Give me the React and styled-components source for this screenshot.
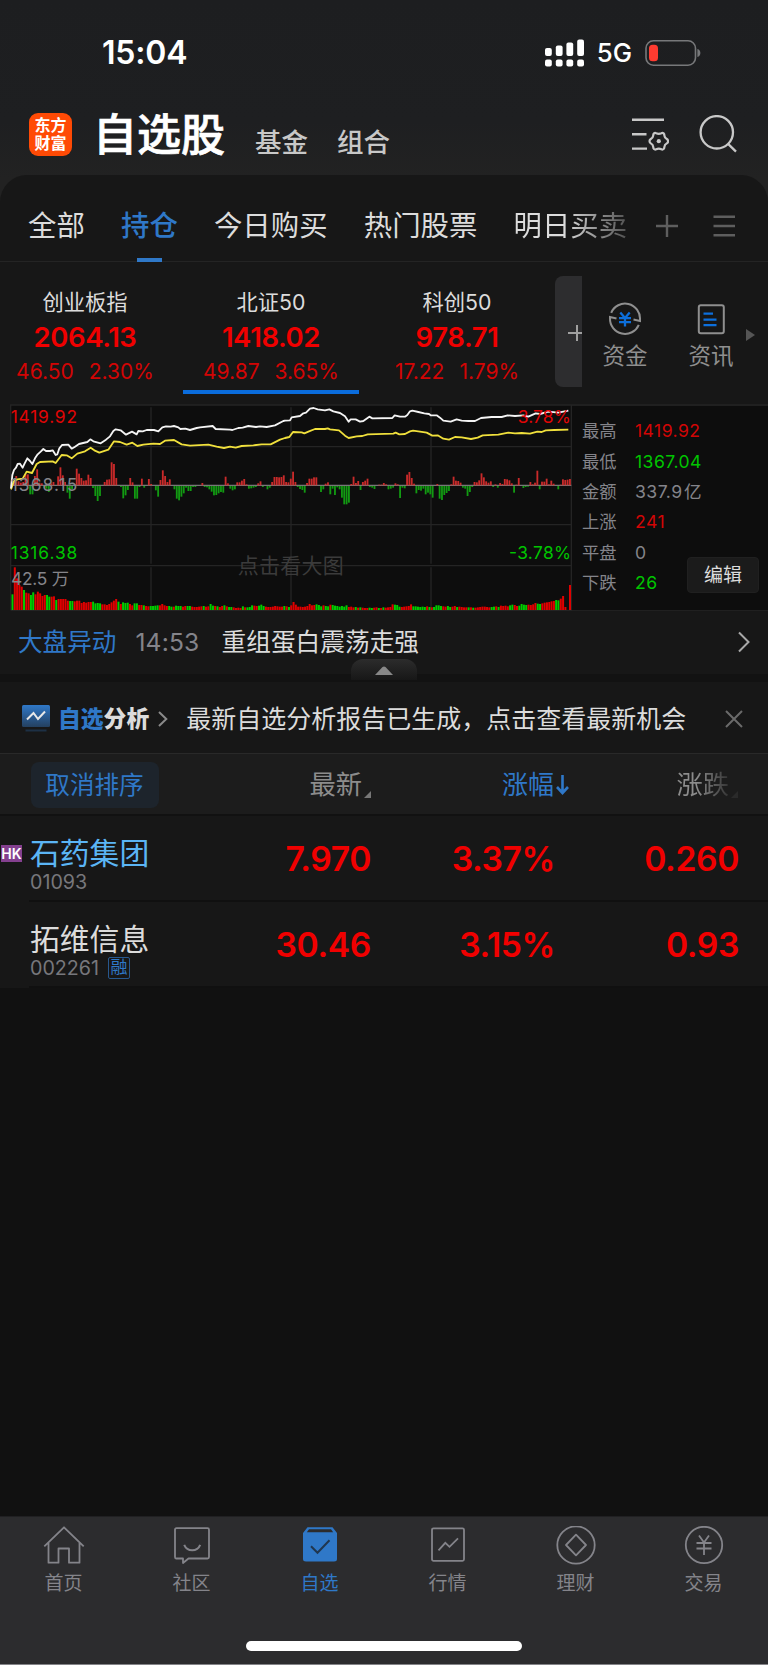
import React from "react";
import styled, { createGlobalStyle } from "styled-components";

const C = {
  blue: "#2f78c8",
  red: "#f00000",
  darkRed: "#d20505",
  green: "#00c400",
  gray: "#84848a",
  text: "#dcdcdc",
  panel: "#171717",
  line: "#242424",
};

const Global = createGlobalStyle`
  * { box-sizing: border-box; }
  body { margin: 0; background: #111; }
  svg { display: block; flex: none; }
`;

const Screen = styled.div`
  width: 768px;
  height: 1665px;
  display: flex;
  flex-direction: column;
  overflow: hidden;
  background: #111;
  color: ${C.text};
  font-family: Inter, "Noto Sans CJK SC", sans-serif;
  white-space: nowrap;
`;

const Text = styled.span`
  flex: none;
  font-size: ${(p) => p.$size}px;
  line-height: ${(p) => p.$lh || p.$size}px;
  font-weight: ${(p) => p.$weight || 400};
  letter-spacing: ${(p) => p.$ls || 0}px;
  color: ${(p) => p.$color || C.text};
  margin-left: ${(p) => p.$ml || 0}px;
`;

/* header */
const Header = styled.header`
  flex: none;
  height: 202px;
  margin-bottom: -27px;
  background: linear-gradient(#1d1e20, #1e1f21 60%, #222 88%);
`;
const StatusBar = styled.div`
  height: 105px;
  display: flex;
  align-items: center;
  justify-content: space-between;
  padding: 0 67px 0 102px;
`;
const StatusRight = styled.div`
  display: flex;
  align-items: center;
  gap: 13px;
`;
const TitleRow = styled.div`
  height: 58px;
  display: flex;
  align-items: center;
  padding: 0 31px 0 29px;
`;
const Logo = styled.div`
  width: 43px;
  height: 43px;
  border-radius: 9px;
  background: #ff4a05;
  display: grid;
  align-content: center;
  justify-content: center;
  font-size: 16px;
  line-height: 18px;
  font-weight: 700;
  color: #fff;
`;
const Title = styled.h1`
  margin: 1px 0 0 21px;
  font-size: 44px;
  line-height: 50px;
  font-weight: 500;
  color: #fff;
  -webkit-text-stroke: 0.7px #fff;
`;
const TitleLinks = styled.nav`
  display: flex;
  gap: 29px;
  margin: 16px auto 0 30px;
`;
const TitleIcons = styled.div`
  display: flex;
  align-items: center;
  gap: 30px;
`;

/* group tabs */
const Tabs = styled.nav`
  flex: none;
  height: 87px;
  display: flex;
  align-items: center;
  gap: 36.2px;
  padding: 15px 31px 0 28px;
  background: ${C.panel};
  border-radius: 27px 27px 0 0;
  border-bottom: 1px solid ${C.line};
`;
const Tab = styled.span`
  position: relative;
  font-size: 28.4px;
  line-height: 40px;
  font-weight: ${(p) => (p.$active ? 500 : 400)};
  color: ${(p) => (p.$active ? C.blue : C.text)};
  ${(p) => p.$fade && `
    color: transparent;
    background: linear-gradient(90deg, #dcdcdc 45%, #444 105%);
    background-clip: text;
  `}
  &::after {
    content: "";
    display: ${(p) => (p.$active ? "block" : "none")};
    position: absolute;
    left: 16px;
    top: 52px;
    width: 25px;
    height: 4px;
    background: ${C.blue};
  }
`;
const TabTools = styled.div`
  display: flex;
  align-items: center;
  gap: 33px;
  margin-left: -8px;
`;

/* index strip */
const IndexStrip = styled.section`
  flex: none;
  height: 142px;
  display: flex;
  background: ${C.panel};
`;
const IndexList = styled.div`
  flex: none;
  display: flex;
  gap: 10px;
  margin-left: -3px;
`;
const IndexCell = styled.div`
  flex: none;
  width: 176px;
  height: 132px;
  padding-top: 29px;
  display: flex;
  flex-direction: column;
  align-items: center;
  gap: 11px;
  border-bottom: 4px solid ${(p) => (p.$active ? "#0a6cdc" : "transparent")};
`;
const Change = styled.div`
  display: flex;
  gap: 15px;
`;
const AddIndex = styled.div`
  flex: none;
  width: 27px;
  height: 111px;
  margin: 14px 0 0 10px;
  border-radius: 8px 0 0 8px;
  background: #2d2d2f;
  display: flex;
  align-items: center;
  padding: 3px 0 0 13px;
  overflow: hidden;
`;
const Shortcuts = styled.div`
  flex: none;
  display: flex;
  padding-left: 21px;
`;
const Shortcut = styled.div`
  flex: none;
  width: 86px;
  height: 142px;
  padding: 40px 42px 0 0;
  display: flex;
  flex-direction: column;
  align-items: center;
  gap: 9px;
`;
const MoreArrow = styled.div`
  margin: 67px 0 0 -29px;
`;

/* chart */
const Market = styled.section`
  flex: none;
  height: 207px;
  display: flex;
  padding-left: 10px;
  background: ${C.panel};
`;
const Stats = styled.div`
  position: relative;
  flex: 1;
  background: #0d0d0d;
  border-top: 2px solid #202020;
  border-bottom: 1px solid #202020;
  padding: 10px 0 0 10px;
`;
const StatRow = styled.div`
  height: 30.4px;
  display: grid;
  grid-template-columns: 53px auto;
  align-items: center;
  word-spacing: -4px;
`;
const EditButton = styled.button`
  position: absolute;
  right: 9px;
  bottom: 17px;
  width: 72px;
  height: 36px;
  padding: 0;
  border: 1px solid #202020;
  border-radius: 4px;
  background: #1b1b1b;
  color: ${C.text};
  font: 400 19px/36px Inter, "Noto Sans CJK SC", sans-serif;
`;

/* news */
const News = styled.section`
  position: relative;
  flex: none;
  height: 71px;
  padding: 1px 18px 2px 18px;
  display: flex;
  align-items: center;
  background: ${C.panel};
  border-bottom: 8px solid #121212;
`;
const Grip = styled.div`
  position: absolute;
  left: 351px;
  top: 48px;
  width: 66px;
  height: 21px;
  border-radius: 12px 12px 0 0;
  background: linear-gradient(#2c2c2c, #171717);
  display: flex;
  justify-content: center;
  padding-top: 7px;
`;

const Analysis = styled.section`
  flex: none;
  height: 72px;
  display: flex;
  align-items: center;
  padding: 3px 25px 0 22px;
  background: ${C.panel};
  border-bottom: 1px solid #292929;
`;

/* table */
const cols = `
  display: grid;
  grid-template-columns: 201px 170px 184px 184px;
  align-items: center;
`;
const TableHead = styled.div`
  flex: none;
  height: 62px;
  padding-top: 2px;
  ${cols}
  background: #1c1c1c;
  border-bottom: 2px solid #111;
`;
const CancelSort = styled.button`
  width: 128px;
  height: 46px;
  margin-left: 31px;
  padding: 0 1px 0 0;
  border: 0;
  border-radius: 8px;
  background: #1d242c;
  color: ${C.blue};
  font: 400 24.6px/46px Inter, "Noto Sans CJK SC", sans-serif;
`;
const SortCell = styled.div`
  display: flex;
  justify-content: flex-end;
  align-items: center;
  gap: 2px;
  margin-right: ${(p) => p.$shift}px;
`;
const Fade = styled.span`
  font-size: 26.3px;
  line-height: 36px;
  color: transparent;
  background: linear-gradient(90deg, #8c8c8c 40%, #333);
  background-clip: text;
`;
const Corner = styled.i`
  align-self: flex-end;
  width: 7px;
  height: 7px;
  margin-bottom: 5px;
  background: ${(p) => p.$color};
  clip-path: polygon(100% 0, 100% 100%, 0 100%);
`;
const StockRow = styled.div`
  flex: none;
  height: 86px;
  ${cols}
  background: ${C.panel};
  background-image: linear-gradient(#101010, #101010);
  background-size: 739px 2px;
  background-position: 29px 84px;
  background-repeat: no-repeat;
`;
const StockInfo = styled.div`
  display: grid;
  grid-template-columns: 30px auto;
  align-items: center;
  padding-top: 10px;
`;
const HkTag = styled.span`
  width: 21px;
  height: 17px;
  margin-left: 1px;
  background: #84408f;
  color: #fff;
  text-align: center;
  font-size: 14px;
  line-height: 17px;
  font-weight: 600;
`;
const CodeLine = styled.div`
  grid-column: 2;
  display: flex;
  align-items: center;
  gap: 9px;
  height: 22px;
`;
const Margin = styled.span`
  width: 22px;
  height: 22px;
  border: 1.5px solid #28588e;
  border-radius: 2px;
  color: ${C.blue};
  font-size: 17px;
  line-height: 19px;
  text-align: center;
`;
const Num = styled.span`
  font-size: 33.7px;
  line-height: 40px;
  font-weight: 600;
  letter-spacing: -0.4px;
  text-align: right;
  color: ${C.red};
`;

/* bottom bar */
const BottomBar = styled.footer`
  flex: none;
  height: 149px;
  margin-top: auto;
  background: #2c2c2e;
  border-top: 1px solid #202022;
  border-bottom: 1px solid #848488;
`;
const NavItems = styled.div`
  height: 124px;
  display: grid;
  grid-template-columns: repeat(6, 1fr);
`;
const NavItem = styled.div`
  display: flex;
  flex-direction: column;
  align-items: center;
  padding: 9px 1px 0 0;
  gap: 6px;
  color: ${(p) => (p.$active ? C.blue : C.gray)};
`;
const HomeBar = styled.div`
  width: 276px;
  height: 10px;
  margin: 0 auto;
  border-radius: 5px;
  background: #fff;
`;

const bars = [
  10, 28, 12, 8, 10, 33, 33, -25, -25, 28, 48, 8, 6, -5, -8, -18, 6, 10, 0, 27, 54, 30, 10, -20, -38, -10, 0, 50, 35,
  22, 14, 15, 32, 22, -6, -30, -45, -30, 0, 10, 17, 18, 69, 64, 22, 0, -3, -37, -28, -12, 22, 9, -38, -38, -3, 20, -5,
  0, 19, 4, 0, -13, -32, 16, 45, 28, 10, 18, 0, -10, -38, -43, -32, -22, -5, -15, -15, -3, -3, 0, 0, 7, -3, -4, -10,
  -17, -28, -27, -22, -18, -20, 26, 6, -8, -13, -10, 9, 9, 14, 19, 3, -8, -7, -5, -3, 6, 12, -3, 0, -10, -5, 10, 25,
  25, 24, 25, 30, 10, 9, 20, 41, 10, -3, -9, -12, -20, 7, 20, 20, 24, 24, 0, -18, -10, 5, 9, -25, -8, -27, -4, -10,
  -35, -55, -55, -50, 4, 26, 7, 13, -12, 10, 14, 20, -3, -5, -9, 0, 2, 2, 7, 3, -10, -8, -5, 6, 3, -36, -5, -7, 32, 40,
  22, 5, -22, -12, -14, -8, -25, -20, -25, -35, 0, 4, -38, -42, -27, -21, -15, 3, 26, 14, 13, 8, -5, -8, -30, -18, -3,
  10, 9, 15, 36, 24, 12, 8, 12, -3, 3, -5, 7, 4, 19, 18, 15, 6, -20, 2, 22, 0, -6, -3, -2, 10, 3, 8, 44, -10, 11, 11,
  20, 3, 14, 5, 0, -10, 2, 18, 16, 17, 19,
];
const barPitch = (1707 - 39) / (bars.length - 1);

/* positive = up volume, negative = down volume */
const volume = [
  -47, 128, 95, 75, 70, -60, 52, 50, -45, -53, 47, 55, 50, 42, 45, -45, -40, 40, 41, -30, 33, 33, 33, 33, 28, -27, -27,
  26, 28, 28, 21, 24, 22, 24, 24, -25, -20, -21, -20, 17, 17, 15, 18, 23, 28, 33, -25, 18, -23, -21, -22, 18, 14, -20,
  -20, 15, 15, -14, 12, 11, -12, -12, -13, -14, 14, 18, 14, 12, -12, -10, 10, -13, -12, -12, 10, 12, -12, -12, 10, 9,
  9, 10, 11, -12, 10, 11, -18, -13, 12, -11, 9, 12, -14, 11, -9, -9, 8, 6, 7, 6, -11, 8, -8, -9, -14, 13, 12, -13, -16,
  -12, 10, 9, 9, 10, 12, 11, 10, 10, -12, 11, -9, 14, 24, 16, 10, 10, 9, 10, 12, 18, 14, 15, -17, -15, -11, 14, -12,
  -11, 16, -15, -13, -12, -10, -12, -10, -14, 9, 10, 8, -9, 7, -8, 7, 6, 6, -7, -6, 7, 8, -6, 6, -8, 7, 8, 9, 17, -16,
  -15, -10, 9, 10, 11, 12, 17, -11, -11, -10, -9, -10, -9, 11, -9, 8, -9, -14, -14, -12, 11, 10, -12, -9, 10, 12, -9,
  10, 9, 8, 8, -8, 8, -7, 7, 8, 9, 10, 10, 9, 8, -9, -10, 11, -9, 13, 12, 13, 11, -14, -16, 15, 12, -13, -18, -16, -15,
  16, 15, 17, 21, -19, -18, 20, 22, 23, 24, 26, 27, -30, -29, 34, 42, 9, 0, 75,
];
const volumePitch = (1707 - 34.5) / (volume.length - 1);

const shift = (pts) => pts.map(([x, y]) => [x + 855, y]);
const price = [
  [33, 280], [37, 240], [42, 225], [48, 218], [53, 207], [60, 206], [68, 218], [74, 205], [82, 190], [90, 198],
  [97, 207], [105, 190], [113, 178], [122, 170], [130, 162], [138, 168], [150, 168], [158, 166], [167, 180],
  [172, 178], [178, 160], [186, 150], [205, 149], [215, 161], [225, 155], [237, 147], [262, 141], [271, 133],
  [280, 139], [302, 145], [318, 134], [330, 124], [340, 108], [347, 103], [362, 106], [378, 119], [396, 110],
  [410, 118], [415, 108], [428, 109], [440, 105], [462, 105], [475, 109], [487, 97], [498, 94], [512, 95], [522, 93],
  [535, 97], [541, 102], [556, 101], [570, 105], [590, 99], [600, 97], [638, 93], [647, 102], [690, 104], [697, 105],
  [715, 99], [728, 98], [745, 93], [768, 96], [780, 94], [800, 96], [825, 91], [850, 78],
  ...shift([
    [0, 77], [15, 76], [20, 67], [45, 63], [55, 55], [63, 53], [75, 41], [86, 39], [98, 43], [120, 46], [133, 43],
    [145, 49], [165, 54], [180, 64], [191, 80], [197, 73], [212, 73], [225, 80], [235, 78], [253, 65], [262, 70],
    [322, 69], [329, 61], [345, 65], [360, 65], [367, 60], [375, 49], [382, 47], [400, 51], [418, 55], [432, 57],
    [437, 61], [455, 61], [465, 68], [475, 77], [497, 80], [515, 73], [530, 77], [550, 78], [570, 78], [588, 69],
    [620, 66], [650, 66], [668, 61], [690, 63], [715, 61], [730, 65], [752, 55], [765, 57], [790, 50], [820, 53],
    [850, 47],
  ]),
];
const average = [
  [33, 283], [42, 258], [52, 253], [68, 251], [80, 230], [96, 234], [110, 207], [120, 201], [158, 199], [167, 204],
  [185, 180], [200, 181], [215, 190], [232, 176], [255, 169], [272, 158], [283, 166], [298, 173], [325, 164],
  [342, 139], [360, 141], [380, 149], [397, 143], [412, 153], [430, 149], [460, 146], [480, 147], [495, 137],
  [522, 135], [545, 148], [570, 152], [625, 149], [650, 155], [672, 159], [690, 155], [707, 158], [725, 153],
  [760, 151], [785, 148], [812, 148], [840, 134],
  ...shift([
    [0, 129], [13, 126], [24, 111], [50, 112], [58, 115], [72, 109], [90, 102], [120, 102], [128, 100], [135, 103],
    [162, 106], [180, 122], [191, 129], [215, 124], [232, 123], [248, 118], [325, 116], [332, 113], [343, 118],
    [360, 117], [375, 109], [384, 107], [405, 110], [425, 113], [442, 122], [458, 121], [475, 131], [492, 134],
    [510, 126], [530, 127], [558, 132], [578, 128], [593, 121], [640, 119], [670, 113], [690, 115], [710, 114],
    [735, 116], [757, 110], [770, 111], [782, 106], [808, 105], [850, 104],
  ]),
];

const MinuteChart = () => (
  <svg width="562" height="207" viewBox="30 27 1686 621" fontFamily='Inter, "Noto Sans CJK SC", sans-serif' fontSize="52">
    <rect x="32" y="30" width="1684" height="616" fill="#0d0d0d" />
    <g stroke="#242424" strokeWidth="4" fill="none">
      <path d="M30 30H1716M32 155H1716M32 389H1716M32 512H1716M32 646H1716" />
      <path d="M32 30V646M453 37V506M873 37V506M1293 37V506M453 517V646M873 517V646M1293 517V646M1714 30V646" />
    </g>
    <path d="M32 271H1714" stroke="#777" strokeWidth="4" />
    <text x="713" y="533" fontSize="63" fill="#3b3b3b" textLength="318">点击看大图</text>
    {bars.map((h, i) => {
      const x = 39 + i * barPitch;
      return h > 0 ? (
        <rect key={i} x={x} y={271 - h} width="5.5" height={h} fill="#c92a2a" />
      ) : (
        <rect key={i} x={x} y="273" width="5.5" height={-h} fill="#129a12" />
      );
    })}
    {volume.map((v, i) => (
      <rect key={i} x={34.5 + i * volumePitch} y={645 - Math.abs(v)} width="6" height={Math.abs(v)} fill={v > 0 ? "#e00000" : "#00cc00"} />
    ))}
    <polyline points={average.join(" ")} fill="none" stroke="#f0e03c" strokeWidth="5.5" strokeLinejoin="round" />
    <polyline points={price.join(" ")} fill="none" stroke="#f4f4f4" strokeWidth="5.5" strokeLinejoin="round" />
    <text x="32" y="85" fill="#e00505" textLength="199">1419.92</text>
    <text x="32" y="289" fill="#85858a" textLength="200">1368.15</text>
    <text x="32" y="491" fill={C.green} textLength="200">1316.38</text>
    <text x="33" y="569" fill="#85858a" textLength="174">42.5 万</text>
    <text x="1553" y="85" fill="#e00505" textLength="159">3.78%</text>
    <text x="1527" y="491" fill={C.green} textLength="186">-3.78%</text>
  </svg>
);

const Signal = () => (
  <svg width="39" height="28" viewBox="0 0 39 28" fill="#fff">
    {[[0, 9, 8], [10.8, 6.5, 10.5], [21.4, 3.5, 13.5], [32.2, 0.5, 16.5]].map(([x, y, h]) => (
      <g key={x}>
        <rect x={x} y={y} width="6.8" height={h} rx="2" />
        <rect x={x} y="20.5" width="6.8" height="7" rx="2" />
      </g>
    ))}
  </svg>
);
const Battery = () => (
  <svg width="56" height="26" viewBox="0 0 56 26">
    <rect x="1" y="0.8" width="49.5" height="24.4" rx="7.5" fill="none" stroke="#77787a" strokeWidth="1.6" />
    <rect x="4" y="4.7" width="9" height="16.6" rx="3.6" fill="#ff3b30" />
    <path d="M52.4 9c4 1 4 7 0 8z" fill="#77787a" />
  </svg>
);

const FilterIcon = () => (
  <svg width="38" height="36" viewBox="0 0 38 36" fill="none" stroke="#c8c8c8" strokeWidth="2.4">
    <path d="M1 3.7H33M1 18.2H15.5M1 32.6H16" />
    <path
      strokeWidth="2.2"
      strokeLinejoin="round"
      d="M25.2 17.2Q27.8 18.4 30.4 17.2Q31.6 16.5 32.6 17.4Q33.4 18.2 33.4 19.6Q33.6 21.8 35.8 23Q37.2 23.8 37 25.2Q37.2 26.6 35.8 27.4Q33.6 28.6 33.4 30.8Q33.4 32.2 32.6 33Q31.6 33.9 30.4 33.2Q27.8 32 25.2 33.2Q24 33.9 23 33Q22.2 32.2 22.2 30.8Q22 28.6 19.8 27.4Q18.4 26.6 18.6 25.2Q18.4 23.8 19.8 23Q22 21.8 22.2 19.6Q22.2 18.2 23 17.4Q24 16.5 25.2 17.2Z"
    />
    <circle cx="27.8" cy="25.2" r="2.1" fill="#c8c8c8" stroke="none" />
  </svg>
);
const SearchIcon = () => (
  <svg width="38" height="38" viewBox="0 0 38 38" fill="none" stroke="#c8c8c8" strokeWidth="2.3">
    <circle cx="17.8" cy="17.3" r="16.2" />
    <path d="M28.8 28.6L37 36.6" />
  </svg>
);

const Svg = ({ w, h, sw = 2, children, className, color }) => (
  <svg className={className} color={color} width={w} height={h} viewBox={`0 0 ${w} ${h}`} fill="none" stroke="currentColor" strokeWidth={sw}>
    {children}
  </svg>
);
const EndIcon = styled(Svg)`
  margin-left: auto;
`;
const Chevron = styled(Svg)`
  margin-left: 9px;
`;

const FundIcon = () => (
  <Svg w={34} h={34} color="#8f8f8f">
    <path d="M3.2 10.8A15 15 0 0 1 32 17.5V19L25.5 17.6" />
    <path d="M30.8 22.8A15 15 0 0 1 2 16.5V15L8.5 16.4" />
    <path d="M12.3 10.5L17 16L21.7 10.5M17 16V24.5M11 16.2H23M11 20.2H23" stroke="#0d6fdb" strokeWidth="2.3" />
  </Svg>
);
const InfoIcon = () => (
  <Svg w={34} h={34} color="#8f8f8f">
    <rect x="4.8" y="3.2" width="25" height="28" rx="2" />
    <path d="M9.5 11.7H19M9.5 17.7H22.5M9.5 23.2H22.5" stroke="#0d6fdb" strokeWidth="2.3" />
  </Svg>
);

const navIcons = {
  home: (
    <Svg w={42} h={42} sw={1.8}>
      <path strokeLinejoin="round" d="M1.3 20.3L21 1.3L40.7 20.3M5.5 17V36.7H15.5V22.5H26V36.7H36.5V17" />
    </Svg>
  ),
  community: (
    <Svg w={42} h={42} sw={1.8}>
      <path strokeLinejoin="round" d="M5.5 2.2H36.5Q38 2.2 38 3.7V31Q38 32.5 36.5 32.5H17.5L12 37V32.5H5Q4 32.5 4 31V3.7Q4 2.2 5.5 2.2Z" />
      <path d="M13.2 18.8Q15.5 24.2 21.2 24.2Q27 24.2 29.2 18.8" strokeWidth="2" />
    </Svg>
  ),
  watch: (
    <Svg w={42} h={42}>
      <path fill="currentColor" stroke="none" d="M8.5 1.3H33.5L38 7V33Q38 35.5 35 35.5H7Q4 35.5 4 33V7Z" />
      <path d="M10 3.2H32L34.2 6.3H7.8Z" fill="#2c2c2e" stroke="none" />
      <path d="M12 20.3L18.5 26.8L30.5 14.3" stroke="#20364f" />
    </Svg>
  ),
  market: (
    <Svg w={42} h={42} sw={1.8}>
      <rect x="5" y="2.3" width="32" height="32.5" rx="1.5" />
      <path d="M11.5 24.3L18.3 16.8L22.5 20.8L31 12.3" />
    </Svg>
  ),
  wealth: (
    <Svg w={42} h={42} sw={1.8}>
      <circle cx="21" cy="19" r="18.7" />
      <path strokeLinejoin="round" d="M21 8.7L31 19L21 29.3L11 19Z" />
    </Svg>
  ),
  trade: (
    <Svg w={42} h={42} sw={1.8}>
      <circle cx="21" cy="19" r="18.2" />
      <path d="M16 9.5L21 16.5L26 9.5M21 16.5V29M13.5 17H28.5M13.5 22.5H28.5" />
    </Svg>
  ),
};

const indices = [
  { name: "创业板指", value: "2064.13", diff: "46.50", pct: "2.30%" },
  { name: "北证50", value: "1418.02", diff: "49.87", pct: "3.65%", active: true },
  { name: "科创50", value: "978.71", diff: "17.22", pct: "1.79%" },
];
const stats = [
  ["最高", "1419.92", C.darkRed],
  ["最低", "1367.04", C.green],
  ["金额", "337.9 亿", C.gray],
  ["上涨", "241", C.darkRed],
  ["平盘", "0", C.gray],
  ["下跌", "26", C.green],
];
const stocks = [
  { name: "石药集团", code: "01093", hk: true, nums: ["7.970", "3.37%", "0.260"] },
  { name: "拓维信息", code: "002261", margin: true, nums: ["30.46", "3.15%", "0.93"] },
];
const nav = [
  ["首页", "home"],
  ["社区", "community"],
  ["自选", "watch"],
  ["行情", "market"],
  ["理财", "wealth"],
  ["交易", "trade"],
];

export default function App() {
  return (
    <Screen lang="zh-CN">
      <Global />
      <Header>
        <StatusBar>
          <Text $size={32} $weight={600} $ls={-0.2} $color="#fff">15:04</Text>
          <StatusRight>
            <Signal />
            <Text $size={25.8} $weight={500} $color="#fff">5G</Text>
            <Battery />
          </StatusRight>
        </StatusBar>
        <TitleRow>
          <Logo><span>东方</span><span>财富</span></Logo>
          <Title>自选股</Title>
          <TitleLinks>
            <Text $size={26.5} $lh={30} $weight={500} $color="#c8c8c8">基金</Text>
            <Text $size={26.5} $lh={30} $weight={500} $color="#c8c8c8">组合</Text>
          </TitleLinks>
          <TitleIcons>
            <FilterIcon />
            <SearchIcon />
          </TitleIcons>
        </TitleRow>
      </Header>

      <Tabs>
        <Tab>全部</Tab>
        <Tab $active>持仓</Tab>
        <Tab>今日购买</Tab>
        <Tab>热门股票</Tab>
        <Tab $fade>明日买卖</Tab>
        <TabTools>
          <Svg w={24} h={24} sw={2.4} color="#5e5e5e"><path d="M1 12H23M12 1V23" /></Svg>
          <Svg w={24} h={24} sw={2.4} color="#5e5e5e"><path d="M1.5 2.8H23M1.5 12H23M1.5 21.2H23" /></Svg>
        </TabTools>
      </Tabs>

      <IndexStrip>
        <IndexList>
          {indices.map((x) => (
            <IndexCell key={x.name} $active={x.active}>
              <Text $size={21.3} $lh={22}>{x.name}</Text>
              <Text $size={27.5} $lh={26} $weight={600} $ls={-0.4} $color={C.red}>{x.value}</Text>
              <Change>
                <Text $size={21} $lh={22} $color={C.darkRed}>{x.diff}</Text>
                <Text $size={21} $lh={22} $color={C.darkRed}>{x.pct}</Text>
              </Change>
            </IndexCell>
          ))}
        </IndexList>
        <AddIndex>
          <Svg w={18} h={18} color="#a0a0a0"><path d="M0 9H18M9 1V17" /></Svg>
        </AddIndex>
        <Shortcuts>
          <Shortcut>
            <FundIcon />
            <Text $size={22.5} $color="#8f8f8f">资金</Text>
          </Shortcut>
          <Shortcut>
            <InfoIcon />
            <Text $size={22.5} $color="#8f8f8f">资讯</Text>
          </Shortcut>
          <MoreArrow>
            <svg width="9" height="12" viewBox="0 0 9 12"><path d="M0 0L9 6L0 12Z" fill="#555" /></svg>
          </MoreArrow>
        </Shortcuts>
      </IndexStrip>

      <Market>
        <MinuteChart />
        <Stats>
          {stats.map(([label, value, color]) => (
            <StatRow key={label}>
              <Text $size={17.3} $lh={24} $color={C.gray}>{label}</Text>
              <Text $size={17.6} $lh={24} $ls={0.45} $color={color}>{value}</Text>
            </StatRow>
          ))}
          <EditButton>编辑</EditButton>
        </Stats>
      </Market>

      <News>
        <Text $size={24.6} $lh={30} $color={C.blue}>大盘异动</Text>
        <Text $size={24.6} $lh={30} $ml={19} $ls={0.2} $color={C.gray}>14:53</Text>
        <Text $size={24.7} $lh={30} $ml={22}>重组蛋白震荡走强</Text>
        <EndIcon w={12} h={22} color="#a8a8a8"><path d="M1 1.5L10.5 11L1 20.5" /></EndIcon>
        <Grip>
          <svg width="18" height="9" viewBox="0 0 18 9"><path d="M0 9L7.5 1Q9 0 10.5 1L18 9Z" fill="#888" /></svg>
        </Grip>
      </News>

      <Analysis>
        <svg width="28" height="28" viewBox="0 0 28 28">
          <defs>
            <linearGradient id="tile" x1="0" y1="0" x2="0" y2="1">
              <stop stopColor="#2f78c8" />
              <stop offset="1" stopColor="#24405f" />
            </linearGradient>
          </defs>
          <rect width="28" height="22" rx="1.5" fill="url(#tile)" />
          <rect x="3.5" y="24.5" width="21" height="2" fill="#1d3045" />
          <path d="M5 14.5L11.5 8L16 14L23 6.5" fill="none" stroke="#e8e8e8" strokeWidth="2" />
        </svg>
        <Text $size={22.8} $lh={30} $weight={800} $ml={8} $color={C.blue}>自选</Text>
        <Text $size={22.8} $lh={30} $weight={800}>分析</Text>
        <Chevron w={10} h={16} color="#8a8a8a"><path d="M1 1L8.3 8L1 15" /></Chevron>
        <Text $size={25} $lh={30} $ml={18}>最新自选分析报告已生成，点击查看最新机会</Text>
        <EndIcon w={18} h={18} color="#6a6a6a"><path d="M1 1L17 17M17 1L1 17" /></EndIcon>
      </Analysis>

      <TableHead>
        <CancelSort>取消排序</CancelSort>
        <SortCell $shift={0}>
          <Text $size={26.3} $lh={36} $color="#8c8c8c">最新</Text>
          <Corner $color="#777" />
        </SortCell>
        <SortCell $shift={-14}>
          <Text $size={26} $lh={36} $color={C.blue}>涨幅</Text>
          <Svg w={13} h={20} sw={2.6} color={C.blue}><path d="M6.5 0V18M1 12L6.5 18L12 12" /></Svg>
        </SortCell>
        <SortCell $shift={1}>
          <Fade>涨跌</Fade>
          <Corner $color="#2a2a2a" />
        </SortCell>
      </TableHead>

      {stocks.map((s) => (
        <StockRow key={s.code}>
          <StockInfo>
            {s.hk ? <HkTag>HK</HkTag> : <i />}
            <Text $size={29.8} $lh={36} $color={s.hk ? "#5bb5f5" : C.text}>{s.name}</Text>
            <CodeLine>
              <Text $size={19.7} $lh={22} $color="#77777c">{s.code}</Text>
              {s.margin && <Margin>融</Margin>}
            </CodeLine>
          </StockInfo>
          {s.nums.map((n) => <Num key={n}>{n}</Num>)}
        </StockRow>
      ))}

      <BottomBar>
        <NavItems>
          {nav.map(([label, icon]) => (
            <NavItem key={icon} $active={icon === "watch"}>
              {navIcons[icon]}
              <Text $size={19} $color="inherit">{label}</Text>
            </NavItem>
          ))}
        </NavItems>
        <HomeBar />
      </BottomBar>
    </Screen>
  );
}
